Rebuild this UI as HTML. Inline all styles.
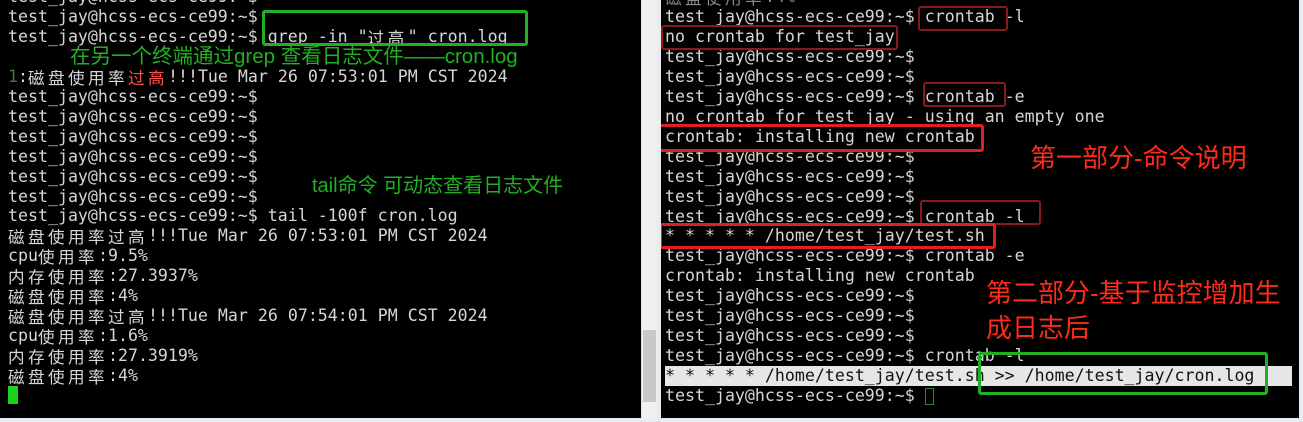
<!DOCTYPE html>
<html><head><meta charset="utf-8"><style>
*{margin:0;padding:0;box-sizing:border-box}
body{width:1303px;height:422px;background:#e9edf0;position:relative;overflow:hidden;font-family:"DejaVu Sans Mono","Liberation Mono","Noto Sans CJK SC",monospace;}
.pane{position:absolute;background:#000;overflow:hidden}
.l{left:0;top:0;width:641px;height:418px}
.r{left:661px;top:0;width:638px;height:418px}
.sb{position:absolute;left:641px;top:0;width:16px;height:418px;background:#f0f0f0;border-left:1px solid #ddd}
.th{position:absolute;left:643px;top:330px;width:13px;height:72px;background:#c8c8c8}
.ln{position:absolute;left:8px;height:20px;line-height:20px;font-size:16.6px;color:#d6d6d6;white-space:pre}
.r .ln{left:4px}
.c{font-family:"Noto Sans CJK SC",sans-serif;font-size:16.6px;letter-spacing:3.4px;line-height:1;display:inline-block;vertical-align:-2px;height:18px}
.box{position:absolute;border:2px solid;border-radius:3px}
.g{border-color:#21b021;border-width:3px}
.rd{border-color:#e02020}
.dr{border-color:#8a1a1a}
.ann{position:absolute;font-family:"Liberation Sans","Noto Sans CJK SC",sans-serif;white-space:nowrap;line-height:1.2}
</style></head><body>
<div class="pane l">
<div class="ln" style="top:-13px">test_jay@hcss-ecs-ce99:~$</div>
<div class="ln" style="top:7px">test_jay@hcss-ecs-ce99:~$</div>
<div class="ln" style="top:27px">test_jay@hcss-ecs-ce99:~$ grep -in "<span class="c">过高</span>" cron.log</div>
<div class="ln" style="top:67px"><span style="color:#3d7a3d">1</span>:<span class="c">磁盘使用率</span><span class="c" style="color:#ff5050">过高</span>!!!Tue Mar 26 07:53:01 PM CST 2024</div>
<div class="ln" style="top:87px">test_jay@hcss-ecs-ce99:~$</div>
<div class="ln" style="top:107px">test_jay@hcss-ecs-ce99:~$</div>
<div class="ln" style="top:127px">test_jay@hcss-ecs-ce99:~$</div>
<div class="ln" style="top:147px">test_jay@hcss-ecs-ce99:~$</div>
<div class="ln" style="top:167px">test_jay@hcss-ecs-ce99:~$</div>
<div class="ln" style="top:187px">test_jay@hcss-ecs-ce99:~$</div>
<div class="ln" style="top:206px">test_jay@hcss-ecs-ce99:~$ tail -100f cron.log</div>
<div class="ln" style="top:226px"><span class="c">磁盘使用率过高</span>!!!Tue Mar 26 07:53:01 PM CST 2024</div>
<div class="ln" style="top:246px">cpu<span class="c">使用率</span>:9.5%</div>
<div class="ln" style="top:266px"><span class="c">内存使用率</span>:27.3937%</div>
<div class="ln" style="top:286px"><span class="c">磁盘使用率</span>:4%</div>
<div class="ln" style="top:306px"><span class="c">磁盘使用率过高</span>!!!Tue Mar 26 07:54:01 PM CST 2024</div>
<div class="ln" style="top:326px">cpu<span class="c">使用率</span>:1.6%</div>
<div class="ln" style="top:346px"><span class="c">内存使用率</span>:27.3919%</div>
<div class="ln" style="top:366px"><span class="c">磁盘使用率</span>:4%</div>
<div style="position:absolute;left:8px;top:386px;width:10px;height:18px;background:#1ad31a"></div>
<div class="box g" style="left:262px;top:10px;width:266px;height:36px"></div>
<div class="ann" style="left:70px;top:45px;font-size:20.5px;color:#22b022">在另一个终端通过grep 查看日志文件——cron.log</div>
<div class="ann" style="left:312px;top:174px;font-size:20px;color:#22b022">tail命令 可动态查看日志文件</div>
</div>
<div class="sb"></div><div class="th"></div>
<div class="pane r">
<div class="ln" style="top:-13px;color:#888"><span class="c">磁盘使用率</span>:4%</div>
<div class="ln" style="top:7px">test_jay@hcss-ecs-ce99:~$ crontab -l</div>
<div class="ln" style="top:27px">no crontab for test_jay</div>
<div class="ln" style="top:47px">test_jay@hcss-ecs-ce99:~$</div>
<div class="ln" style="top:67px">test_jay@hcss-ecs-ce99:~$</div>
<div class="ln" style="top:87px">test_jay@hcss-ecs-ce99:~$ crontab -e</div>
<div class="ln" style="top:107px">no crontab for test_jay - using an empty one</div>
<div class="ln" style="top:127px">crontab: installing new crontab</div>
<div class="ln" style="top:147px">test_jay@hcss-ecs-ce99:~$</div>
<div class="ln" style="top:167px">test_jay@hcss-ecs-ce99:~$</div>
<div class="ln" style="top:187px">test_jay@hcss-ecs-ce99:~$</div>
<div class="ln" style="top:207px">test_jay@hcss-ecs-ce99:~$ crontab -l</div>
<div class="ln" style="top:226px">* * * * * /home/test_jay/test.sh</div>
<div class="ln" style="top:246px">test_jay@hcss-ecs-ce99:~$ crontab -e</div>
<div class="ln" style="top:266px">crontab: installing new crontab</div>
<div class="ln" style="top:286px">test_jay@hcss-ecs-ce99:~$</div>
<div class="ln" style="top:306px">test_jay@hcss-ecs-ce99:~$</div>
<div class="ln" style="top:326px">test_jay@hcss-ecs-ce99:~$</div>
<div class="ln" style="top:346px">test_jay@hcss-ecs-ce99:~$ crontab -l</div>
<div class="ln" style="top:366px;left:4px;width:627px;background:#e6e6e6;color:#111">* * * * * /home/test_jay/test.sh >> /home/test_jay/cron.log</div>
<div class="ln" style="top:386px">test_jay@hcss-ecs-ce99:~$</div>
<div style="position:absolute;left:264px;top:388px;width:9px;height:17px;border:1px solid #2a8a2a"></div>
<div class="box dr" style="left:257px;top:6px;width:90px;height:25px"></div>
<div class="box dr" style="left:0px;top:25px;width:237px;height:25px"></div>
<div class="box dr" style="left:262px;top:82px;width:83px;height:25px"></div>
<div class="box rd" style="left:-3px;top:124px;width:326px;height:28px;border-width:3px"></div>
<div class="box dr" style="left:259px;top:200px;width:121px;height:25px"></div>
<div class="box rd" style="left:-2px;top:223px;width:337px;height:26px;border-width:3px"></div>
<div class="box g" style="left:317px;top:352px;width:290px;height:43px"></div>
<div class="ann" style="left:369px;top:143px;font-size:26px;color:#ff2a1a">第一部分-命令说明</div>
<div class="ann" style="left:325px;top:278px;font-size:26px;color:#ff2a1a">第二部分-基于监控增加生</div>
<div class="ann" style="left:325px;top:313px;font-size:26px;color:#ff2a1a">成日志后</div>
</div>
</body></html>
